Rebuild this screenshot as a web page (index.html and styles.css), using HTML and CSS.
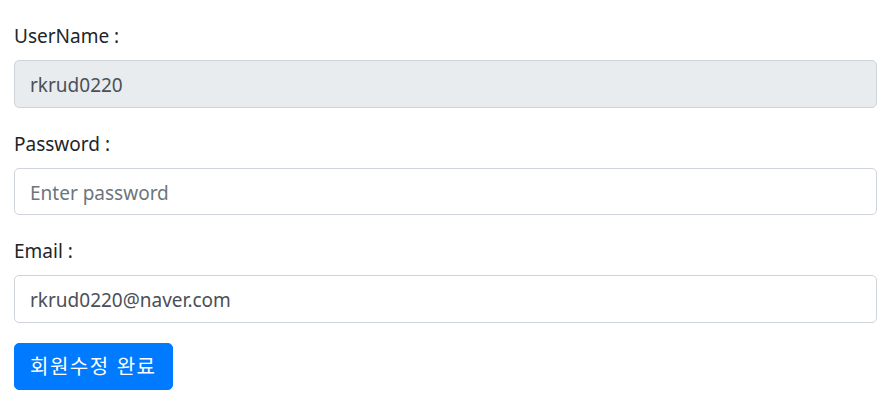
FILE: index.html
```html
<!DOCTYPE html>
<html lang="ko">
<head>
<meta charset="utf-8">
<title>회원수정</title>
<link rel="stylesheet" href="styles.css">
</head>
<body>
<form class="form">
  <div class="form-group">
    <label class="label" for="username">UserName :</label>
    <input class="control" id="username" type="text" value="rkrud0220" disabled>
  </div>
  <div class="form-group">
    <label class="label" for="password">Password :</label>
    <input class="control" id="password" type="password" placeholder="Enter password">
  </div>
  <div class="form-group">
    <label class="label" for="email">Email :</label>
    <input class="control" id="email" type="email" value="rkrud0220@naver.com">
  </div>
  <button class="btn" type="button">회원수정 완료</button>
</form>
</body>
</html>
```

FILE: styles.css
```css
* { box-sizing: border-box; }
html, body { margin: 0; }
body {
  font-family: "Noto Sans", "Noto Sans CJK KR", sans-serif;
  font-size: 19px;
  line-height: 1.5;
  color: #212529;
  background: #fff;
}
.form {
  padding: 20px 11px 0 14px;
}
.form-group {
  margin-bottom: 20px;
}
.label {
  display: block;
  height: 30px;
  padding-top: 2px;
  margin-bottom: 10px;
  line-height: 28px;
}
.control {
  display: block;
  width: 100%;
  height: 47.5px;
  padding: 9px 15px 6px;
  font: inherit;
  color: #495057;
  background: #fff;
  border: 1px solid #ced4da;
  border-radius: 5px;
  outline: none;
}
.control::placeholder { color: #6c757d; opacity: 1; }
.control:disabled { background: #e9ecef; }
.btn {
  display: inline-block;
  height: 47.5px;
  padding: 7.5px 15px;
  font-family: "Noto Sans CJK KR", "Noto Sans", sans-serif;
  font-size: 20px;
  line-height: 1.5;
  letter-spacing: 1.5px;
  color: #fff;
  background: #007bff;
  border: 1px solid #007bff;
  border-radius: 5px;
}
```
